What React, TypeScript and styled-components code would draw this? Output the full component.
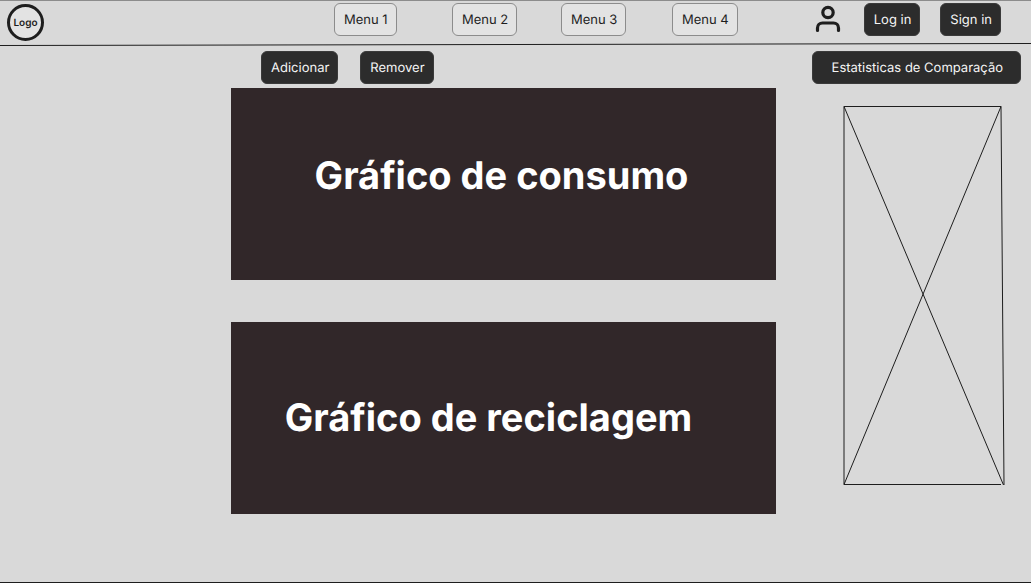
import React from "react";
import styled, { createGlobalStyle } from "styled-components";

const GlobalStyle = createGlobalStyle`
  *, *::before, *::after { box-sizing: border-box; }
  body {
    margin: 0;
    background: #d9d9d9;
    color: #1e1e1e;
    font-family: Inter, "Liberation Sans", sans-serif;
    text-rendering: geometricPrecision;
  }
`;

const Page = styled.div`
  display: flex;
  flex-direction: column;
  min-height: 100vh;
  border-top: 1px solid #8c8c8c;
  border-bottom: 1px solid #1e1e1e;
`;

const Header = styled.header`
  display: grid;
  grid-template-columns: 334fr 403px 294fr;
  align-items: start;
  padding: 2px 0 1px;
`;

const Logo = styled.a`
  display: flex;
  align-items: center;
  justify-content: center;
  width: 37px;
  height: 37px;
  margin: 1px 0 0 7px;
  border: 3px solid #1e1e1e;
  border-radius: 50%;
  background: #e3e3e3;
  color: #1e1e1e;
  font-size: 10px;
  font-weight: 600;
  text-decoration: none;
`;

const Nav = styled.nav`
  display: grid;
  grid-template-columns: 118px 109px 111px auto;
  justify-items: start;
`;

const Actions = styled.div`
  display: flex;
  justify-content: flex-end;
  gap: 20px;
  padding-right: 30px;
`;

const Button = styled.button<{ $light?: boolean; $wide?: boolean }>`
  height: 33px;
  padding: 1px ${(p) => (p.$wide ? 17 : 8)}px 0 ${(p) => (p.$wide ? 19 : 9)}px;
  border: 1px solid ${(p) => (p.$light ? "#8c8c8c" : "#3a3a3a")};
  border-radius: 6px;
  background: ${(p) => (p.$light ? "#e3e3e3" : "#2c2c2c")};
  color: ${(p) => (p.$light ? "#1e1e1e" : "#f5f5f5")};
  font-family: inherit;
  font-size: 13px;
  line-height: 16px;
  text-rendering: inherit;
  white-space: nowrap;
  cursor: pointer;
`;

const UserIcon = styled.svg`
  display: block;
  width: 32px;
  height: 32px;
`;

const Rule = styled.svg`
  display: block;
  width: 100%;
  height: 4px;
`;

const Main = styled.main`
  display: grid;
  grid-template-columns: 231fr 545fr 255fr;
  padding-top: 5px;
`;

const Charts = styled.div`
  grid-column: 2;
`;

const Toolbar = styled.div`
  display: flex;
  gap: 22px;
  padding: 0 30px 4px;
`;

const Panel = styled.section<{ $shift: number }>`
  display: flex;
  align-items: center;
  justify-content: center;
  height: 192px;
  padding: 0 ${(p) => p.$shift}px 16px 0;
  background: #312729;

  & + & {
    margin-top: 42px;
    padding-bottom: 0;
  }
`;

const Title = styled.h2`
  margin: 0;
  color: #fff;
  font-size: 38px;
  font-weight: 700;
  line-height: 48px;
  white-space: nowrap;
`;

const Aside = styled.aside`
  display: flex;
  flex-direction: column;
  align-items: flex-end;
  gap: 22px;
  padding-right: 10px;
`;

const Placeholder = styled.svg`
  display: block;
  width: 162px;
  height: 380px;
  margin-right: 16px;
`;

export default function App() {
  return (
    <>
      <GlobalStyle />
      <Page>
        <Header>
          <Logo href="#">Logo</Logo>
          <Nav>
            {[1, 2, 3, 4].map((n) => (
              <Button key={n} type="button" $light>
                Menu {n}
              </Button>
            ))}
          </Nav>
          <Actions>
            <UserIcon viewBox="0 0 32 32" fill="none" stroke="#1e1e1e" strokeWidth="3.2" strokeLinecap="round" aria-hidden="true">
              <circle cx="16" cy="9.5" r="5.2" />
              <path d="M5.500 27.500v-2.500a5 5 0 0 1 5-5h11a5 5 0 0 1 5 5v2.500" />
            </UserIcon>
            <Button type="button">Log in</Button>
            <Button type="button">Sign in</Button>
          </Actions>
        </Header>
        <Rule viewBox="0 0 1031 4" preserveAspectRatio="none" aria-hidden="true">
          <line x1="0" y1="3.500" x2="1031" y2="1.500" stroke="#1e1e1e" />
        </Rule>
        <Main>
          <Charts>
            <Toolbar>
              <Button type="button">Adicionar</Button>
              <Button type="button">Remover</Button>
            </Toolbar>
            <Panel $shift={4}>
              <Title>Gráfico de consumo</Title>
            </Panel>
            <Panel $shift={30}>
              <Title>Gráfico de reciclagem</Title>
            </Panel>
          </Charts>
          <Aside>
            <Button type="button" $wide>
              Estatisticas de Comparação
            </Button>
            <Placeholder viewBox="0 0 162 380" fill="none" stroke="#1e1e1e" aria-hidden="true">
              <path d="M1 .5H158L161 379M158 378.500H1V.5L160.500 379M158 .5L1 378.500" />
            </Placeholder>
          </Aside>
        </Main>
      </Page>
    </>
  );
}
